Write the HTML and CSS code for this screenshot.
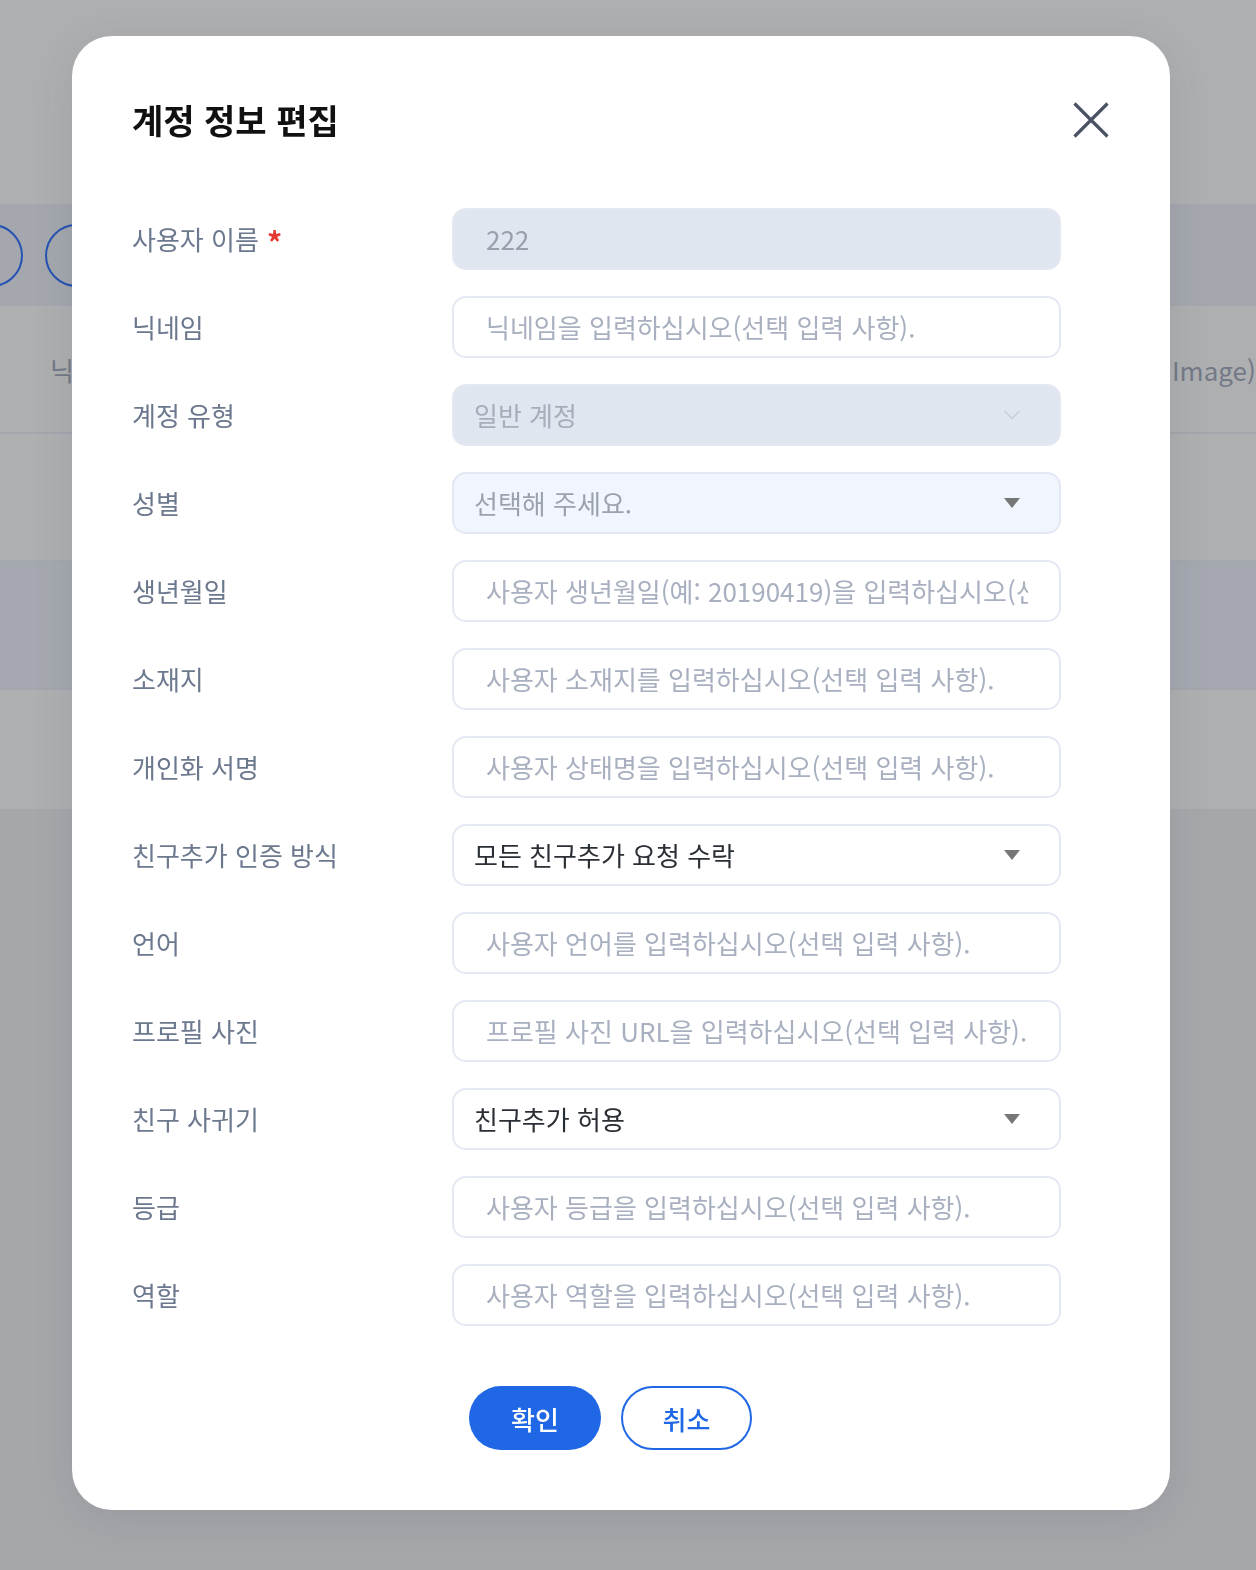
FILE: index.html
```html
<!DOCTYPE html>
<html lang="ko">
<head>
<meta charset="utf-8">
<title>계정 정보 편집</title>
<link rel="stylesheet" href="styles.css">
</head>
<body>
<div class="page">
  <div class="bg-top"></div>
  <div class="bg-head">
    <span class="circle c1"></span>
    <span class="circle c2"></span>
  </div>
  <div class="bg-row">
    <span class="bg-text left">닉</span>
    <span class="bg-text right">Image)</span>
  </div>
  <div class="bg-row"></div>
  <div class="bg-row blue"></div>
  <div class="bg-row last"></div>
  <div class="bg-rest"></div>
</div>

<div class="overlay">
  <div class="modal">
    <div class="modal-header">
      <h1 class="modal-title">계정 정보 편집</h1>
      <button class="close" aria-label="닫기">
        <svg width="36" height="36" viewBox="0 0 36 36"><path d="M1.5 1.5 L34.5 34.5 M34.5 1.5 L1.5 34.5" stroke="#4a5163" stroke-width="3.2" fill="none"/></svg>
      </button>
    </div>

    <form class="form">
      <label class="label">사용자 이름 <span class="req">*</span></label>
      <div class="field disabled"><span class="val pad-lg">222</span></div>

      <label class="label">닉네임</label>
      <div class="field"><span class="ph pad-lg">닉네임을 입력하십시오(선택 입력 사항).</span></div>

      <label class="label">계정 유형</label>
      <div class="field disabled select">
        <span class="val light">일반 계정</span>
        <svg class="chev" width="18" height="12" viewBox="0 0 18 12"><path d="M1.5 2 L9 9.5 L16.5 2" stroke="#cad0da" stroke-width="1.6" fill="none"/></svg>
      </div>

      <label class="label">성별</label>
      <div class="field select tint">
        <span class="val muted">선택해 주세요.</span>
        <svg class="tri" width="16" height="10" viewBox="0 0 16 10"><path d="M0 0 H16 L8 10 Z" fill="#767676"/></svg>
      </div>

      <label class="label">생년월일</label>
      <div class="field"><span class="ph pad-lg">사용자 생년월일(예: 20190419)을 입력하십시오(선택 입력 사항).</span></div>

      <label class="label">소재지</label>
      <div class="field"><span class="ph pad-lg">사용자 소재지를 입력하십시오(선택 입력 사항).</span></div>

      <label class="label">개인화 서명</label>
      <div class="field"><span class="ph pad-lg">사용자 상태명을 입력하십시오(선택 입력 사항).</span></div>

      <label class="label">친구추가 인증 방식</label>
      <div class="field select">
        <span class="val dark">모든 친구추가 요청 수락</span>
        <svg class="tri" width="16" height="10" viewBox="0 0 16 10"><path d="M0 0 H16 L8 10 Z" fill="#767676"/></svg>
      </div>

      <label class="label">언어</label>
      <div class="field"><span class="ph pad-lg">사용자 언어를 입력하십시오(선택 입력 사항).</span></div>

      <label class="label">프로필 사진</label>
      <div class="field"><span class="ph pad-lg">프로필 사진 URL을 입력하십시오(선택 입력 사항).</span></div>

      <label class="label">친구 사귀기</label>
      <div class="field select">
        <span class="val dark">친구추가 허용</span>
        <svg class="tri" width="16" height="10" viewBox="0 0 16 10"><path d="M0 0 H16 L8 10 Z" fill="#767676"/></svg>
      </div>

      <label class="label">등급</label>
      <div class="field"><span class="ph pad-lg">사용자 등급을 입력하십시오(선택 입력 사항).</span></div>

      <label class="label">역할</label>
      <div class="field"><span class="ph pad-lg">사용자 역할을 입력하십시오(선택 입력 사항).</span></div>
    </form>

    <div class="actions">
      <button class="btn primary">확인</button>
      <button class="btn outline">취소</button>
    </div>
  </div>
</div>
</body>
</html>
```

FILE: styles.css
```css
* { box-sizing: border-box; }

html, body {
  margin: 0;
  padding: 0;
  height: 1570px;
  overflow: hidden;
  font-family: "Noto Sans CJK KR", "Noto Sans", sans-serif;
}

.page {
  width: 1256px;
  height: 1570px;
  display: flex;
  flex-direction: column;
  background: #a6a7ab;
}

.bg-top {
  height: 204px;
  background: #aeafb1;
}

.bg-head {
  height: 102px;
  background: #a4a7ae;
  position: relative;
  overflow: hidden;
}

.circle {
  position: absolute;
  top: 20px;
  width: 63px;
  height: 63px;
  border: 2px solid #2653b3;
  border-radius: 50%;
}
.c1 { left: -40px; }
.c2 { left: 45px; }

.bg-row {
  height: 128px;
  background: #aeafb1;
  border-bottom: 2px solid #a3a7ae;
  position: relative;
}
.bg-row.blue {
  background: #a5a8b0;
}
.bg-row.last {
  height: 119px;
  border-bottom: none;
}

.bg-text {
  position: absolute;
  top: 46px;
  font-size: 26px;
  line-height: 36px;
  color: #737987;
}
.bg-text.left { left: 50px; }
.bg-text.right { left: 1172px; }

.bg-rest {
  flex: 1;
  background: #a6a7ab;
}

.overlay {
  position: fixed;
  inset: 0;
}

.modal {
  position: absolute;
  left: 72px;
  top: 36px;
  width: 1098px;
  height: 1474px;
  background: #ffffff;
  border-radius: 40px;
  padding: 60px;
  box-shadow: 0 10px 40px rgba(60, 64, 72, 0.12);
}

.modal-header {
  display: flex;
  align-items: center;
  justify-content: space-between;
  height: 48px;
}

.modal-title {
  margin: 0;
  font-size: 34px;
  line-height: 48px;
  font-weight: 700;
  color: #111111;
}

.close {
  border: none;
  background: none;
  padding: 0;
  width: 36px;
  height: 36px;
  margin-right: 1px;
  display: block;
}
.close svg { display: block; }

.form {
  margin-top: 64px;
  display: grid;
  grid-template-columns: 320px 609px;
  row-gap: 26px;
  align-items: center;
}

.label {
  font-size: 26px;
  line-height: 36px;
  color: #6c788e;
  display: flex;
  align-items: center;
}

.req {
  color: #e53935;
  font-weight: 700;
  font-size: 30px;
  line-height: 36px;
  margin-left: 8px;
  margin-top: 4px;
}

.field {
  height: 62px;
  border: 2px solid #e5e9f3;
  border-radius: 14px;
  background: #ffffff;
  display: flex;
  align-items: center;
  padding: 0 31px 0 20px;
  overflow: hidden;
  white-space: nowrap;
}

.field.disabled {
  background: #e0e6f0;
  border-color: #e3e8f1;
}

.field.tint {
  background: #f0f5fe;
  border-color: #e3e9f4;
}

.field.select {
  justify-content: space-between;
  padding-right: 39px;
}

.pad-lg { padding-left: 12px; }

.ph, .val {
  font-size: 26px;
  line-height: 36px;
  overflow: hidden;
}

.ph { color: #a8b0c0; }

.val { color: #9aa0ab; }
.val.light { color: #a8aeb9; }
.val.muted { color: #9ca2ad; }
.val.dark { color: #2a2e35; }

.chev { display: block; margin-right: -1px; }
.tri { display: block; }

.actions {
  margin-top: 60px;
  padding-left: 337px;
  display: flex;
  gap: 20px;
}

.btn {
  width: 132px;
  height: 64px;
  border-radius: 32px;
  font-family: "Noto Sans CJK KR", "Noto Sans", sans-serif;
  font-size: 26px;
  font-weight: 500;
  padding: 0;
}

.btn.primary {
  background: #1f67e5;
  color: #ffffff;
  border: none;
}

.btn.outline {
  width: 131px;
  background: #ffffff;
  color: #1f67e5;
  border: 2px solid #1f67e5;
}
```
